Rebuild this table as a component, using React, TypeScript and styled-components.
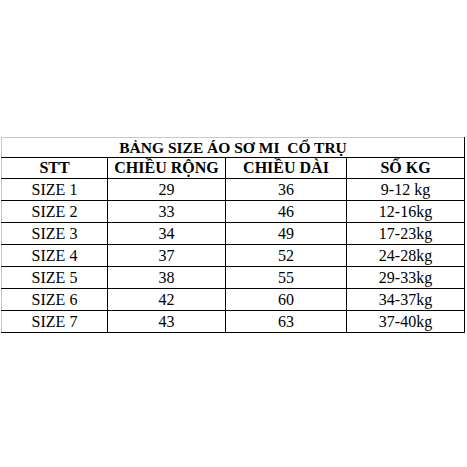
import React from 'react'
import styled, { createGlobalStyle } from 'styled-components'

const rows = [
    { name: 'SIZE 1', width: 29, length: 36, kg: '9-12 kg' },
    { name: 'SIZE 2', width: 33, length: 46, kg: '12-16kg' },
    { name: 'SIZE 3', width: 34, length: 49, kg: '17-23kg' },
    { name: 'SIZE 4', width: 37, length: 52, kg: '24-28kg' },
    { name: 'SIZE 5', width: 38, length: 55, kg: '29-33kg' },
    { name: 'SIZE 6', width: 42, length: 60, kg: '34-37kg' },
    { name: 'SIZE 7', width: 43, length: 63, kg: '37-40kg' },
]

export default function App() {
    return (
        <Page>
            <GlobalStyle />
            <Table>
                <colgroup>
                    <col style={{ width: 106 }} />
                    <col style={{ width: 118 }} />
                    <col style={{ width: 121 }} />
                    <col style={{ width: 118 }} />
                </colgroup>
                <thead>
                    <tr>
                        <Title colSpan={4}>BẢNG SIZE ÁO SƠ MI&nbsp; CỔ TRỤ</Title>
                    </tr>
                    <tr>
                        <Head>STT</Head>
                        <Head>CHIỀU RỘNG</Head>
                        <Head>CHIỀU DÀI</Head>
                        <Head>SỐ KG</Head>
                    </tr>
                </thead>
                <tbody>
                    {rows.map((r) => (
                        <tr key={r.name}>
                            <Cell>{r.name}</Cell>
                            <Cell>{r.width}</Cell>
                            <Cell>{r.length}</Cell>
                            <Cell>{r.kg}</Cell>
                        </tr>
                    ))}
                </tbody>
            </Table>
        </Page>
    )
}

const GlobalStyle = createGlobalStyle`
    html, body {
        margin: 0;
        padding: 0;
        background: #ffffff;
    }
`

const Page = styled.div`
    width: 467px;
    height: 467px;
    padding: 137px 0 0 1px;
    box-sizing: border-box;
    font-family: "Liberation Serif", "Times New Roman", serif;
    color: #000;
`

const Table = styled.table`
    border-collapse: collapse;
    table-layout: fixed;
    width: 464px;
    border-top: 1px solid #c8c8c8;
    border-left: 1px solid #c8c8c8;
    border-right: 1px solid #000;
    border-bottom: 1px solid #000;
`

const Title = styled.th`
    height: 19px;
    padding: 0;
    font-size: 15.5px;
    font-weight: bold;
    text-align: center;
    line-height: 19px;
    border-bottom: 1px solid #000;
`

const Head = styled.th`
    height: 20px;
    padding: 0;
    font-size: 16px;
    font-weight: bold;
    text-align: center;
    line-height: 20px;
    border: 1px solid #000;
    &:first-child {
        border-left-color: #c8c8c8;
    }
`

const Cell = styled.td`
    height: 21px;
    padding: 0;
    font-size: 16px;
    text-align: center;
    line-height: 21px;
    border: 1px solid #000;
    &:first-child {
        border-left-color: #c8c8c8;
    }
`
